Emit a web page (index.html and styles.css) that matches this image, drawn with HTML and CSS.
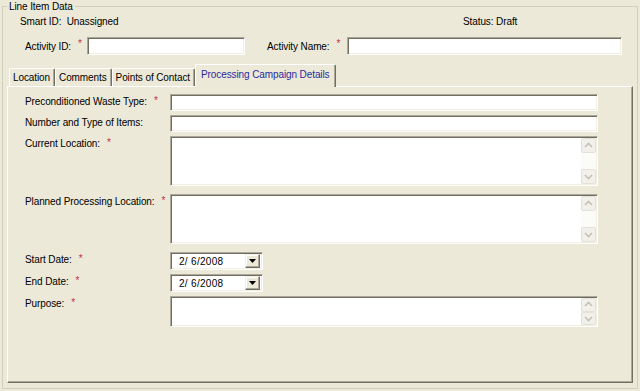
FILE: index.html
```html
<!DOCTYPE html>
<html lang="en">
<head>
    <meta charset="UTF-8">
    <title>Line Item Data</title>
    <link rel="stylesheet" href="styles.css">
</head>
<body>
    <div class="group">
        <div class="legend">Line Item Data</div>

        <div class="info">
            <span class="smart-id">Smart ID:&nbsp; Unassigned</span>
            <span>Status: Draft</span>
        </div>

        <div class="activity">
            <label class="lbl lbl-id">Activity ID:<span class="req">*</span></label>
            <input type="text" class="text id-input">
            <label class="lbl lbl-name">Activity Name:<span class="req">*</span></label>
            <input type="text" class="text name-input">
        </div>

        <div class="tabs">
            <div class="tab">Location</div>
            <div class="tab">Comments</div>
            <div class="tab">Points of Contact</div>
            <div class="tab active">Processing Campaign Details</div>
        </div>

        <div class="panel">
            <div class="field">
                <label class="field-label">Preconditioned Waste Type:<span class="req">*</span></label>
                <input type="text" class="text wide">
            </div>
            <div class="field">
                <label class="field-label">Number and Type of Items:</label>
                <input type="text" class="text wide">
            </div>
            <div class="field">
                <label class="field-label">Current Location:<span class="req">*</span></label>
                <div class="area tall">
                    <div class="scroll">
                        <div class="scroll-btn"><svg width="15" height="15" viewBox="0 0 15 15"><polyline points="4,9 7.5,5.5 11,9" /></svg></div>
                        <div class="scroll-btn"><svg width="15" height="15" viewBox="0 0 15 15"><polyline points="4,6 7.5,9.5 11,6" /></svg></div>
                    </div>
                </div>
            </div>
            <div class="field after-area">
                <label class="field-label">Planned Processing Location:<span class="req">*</span></label>
                <div class="area tall">
                    <div class="scroll">
                        <div class="scroll-btn"><svg width="15" height="15" viewBox="0 0 15 15"><polyline points="4,9 7.5,5.5 11,9" /></svg></div>
                        <div class="scroll-btn"><svg width="15" height="15" viewBox="0 0 15 15"><polyline points="4,6 7.5,9.5 11,6" /></svg></div>
                    </div>
                </div>
            </div>
            <div class="field after-area">
                <label class="field-label">Start Date:<span class="req">*</span></label>
                <div class="date">
                    <span class="date-value">2/ 6/2008</span>
                    <div class="drop-btn"><svg width="7" height="4" viewBox="0 0 7 4"><polygon points="0,0 7,0 3.5,4" /></svg></div>
                </div>
            </div>
            <div class="field">
                <label class="field-label">End Date:<span class="req">*</span></label>
                <div class="date">
                    <span class="date-value">2/ 6/2008</span>
                    <div class="drop-btn"><svg width="7" height="4" viewBox="0 0 7 4"><polygon points="0,0 7,0 3.5,4" /></svg></div>
                </div>
            </div>
            <div class="field">
                <label class="field-label">Purpose:<span class="req">*</span></label>
                <div class="area short">
                    <div class="scroll">
                        <div class="scroll-btn"><svg width="15" height="13" viewBox="0 0 15 13"><polyline points="4,8 7.5,4.5 11,8" /></svg></div>
                        <div class="scroll-btn"><svg width="15" height="13" viewBox="0 0 15 13"><polyline points="4,5 7.5,8.5 11,5" /></svg></div>
                    </div>
                </div>
            </div>
        </div>
    </div>
</body>
</html>
```

FILE: styles.css
```css
body {
    margin: 0;
    background: #ece9d8;
    font-family: 'Liberation Sans', Arial, sans-serif;
    font-size: 10px;
    line-height: 13px;
    letter-spacing: -0.1px;
    color: #000;
}

.group {
    box-sizing: border-box;
    margin: 6px 2px 0 2px;
    height: 383px;
    border: 1px solid #d0d0bf;
}

.legend {
    width: fit-content;
    margin: -7px 0 0 4px;
    padding: 0 2px;
    background: #ece9d8;
}

.info {
    display: flex;
    margin-top: 2px;
    padding-left: 17px;
}

.smart-id {
    width: 443px;
}

.activity {
    display: flex;
    align-items: center;
    margin-top: 9px;
    padding-left: 22px;
}

.lbl {
    display: flex;
    align-items: flex-start;
    box-sizing: border-box;
}

.lbl-id {
    width: 62px;
}

.lbl-name {
    width: 80px;
    margin-left: 22px;
}

.req {
    color: #c0304a;
    font-size: 10px;
    line-height: 13px;
    margin-left: 7px;
    margin-top: -3px;
}

.text,
.area,
.date {
    box-sizing: border-box;
    background: #fff;
    border: 1px solid;
    border-color: #aca899 #fff #fff #aca899;
    box-shadow: inset 1px 1px #716f64, inset -1px -1px #f1efe2;
    font: inherit;
    margin: 0;
    padding: 0 3px;
    outline: none;
}

.id-input {
    width: 158px;
    height: 18px;
}

.name-input {
    width: 275px;
    height: 18px;
}

.tabs {
    position: relative;
    z-index: 1;
    display: flex;
    align-items: flex-end;
    height: 23px;
    margin: 9px 0 -1px 6px;
}

.tab {
    box-sizing: border-box;
    height: 18px;
    margin-bottom: 1px;
    padding: 2px 4px 0 3px;
    border-top: 1px solid #fff;
    border-left: 1px solid #fff;
    border-right: 1px solid #716f64;
    border-radius: 2px 2px 0 0;
    box-shadow: inset -1px 0 #aca899;
    background: #ece9d8;
    white-space: nowrap;
}

.tab.active {
    height: 23px;
    margin-bottom: 0;
    padding: 3px 5px 0 5px;
    color: #2a2aa0;
}

.panel {
    box-sizing: border-box;
    width: 626px;
    height: 297px;
    margin-left: 4px;
    padding: 7px 0 0 17px;
    border: 1px solid;
    border-color: #fff #716f64 #716f64 #fff;
    box-shadow: inset -1px -1px #aca899;
}

.field {
    display: flex;
    align-items: flex-start;
    margin-top: 4px;
}

.field:first-child {
    margin-top: 0;
}

.field.after-area {
    margin-top: 8px;
}

.field-label {
    display: flex;
    align-items: flex-start;
    width: 145px;
    padding-top: 1px;
    white-space: nowrap;
}

.field-label .req {
    margin-top: -1px;
}

.wide {
    width: 428px;
    height: 17px;
}

.area {
    display: flex;
    justify-content: flex-end;
    width: 428px;
    padding: 1px;
}

.area.tall {
    height: 50px;
}

.area.short {
    height: 31px;
}

.scroll {
    display: flex;
    flex-direction: column;
    justify-content: space-between;
    width: 15px;
    background: #fbfbf8;
}

.scroll-btn {
    box-sizing: border-box;
    flex: 0 1 15px;
    min-height: 0;
    overflow: hidden;
    background: #f1f0ea;
    border: 1px solid #e4e2d8;
    border-radius: 2px;
}

.scroll-btn svg {
    display: block;
    margin: -1px 0 0 -1px;
}

.scroll-btn polyline {
    fill: none;
    stroke: #c4c2b6;
    stroke-width: 1.6;
}

.date {
    display: flex;
    align-items: center;
    width: 93px;
    height: 18px;
    padding: 0 2px 0 8px;
}

.date-value {
    white-space: pre;
    letter-spacing: 0.3px;
}

.drop-btn {
    box-sizing: border-box;
    display: flex;
    align-items: center;
    justify-content: center;
    width: 15px;
    height: 14px;
    margin-left: auto;
    background: #ece9d8;
    border: 1px solid;
    border-color: #f1efe2 #716f64 #716f64 #f1efe2;
    box-shadow: inset -1px -1px #aca899, inset 1px 1px #fff;
}

.drop-btn polygon {
    fill: #000;
}
```
